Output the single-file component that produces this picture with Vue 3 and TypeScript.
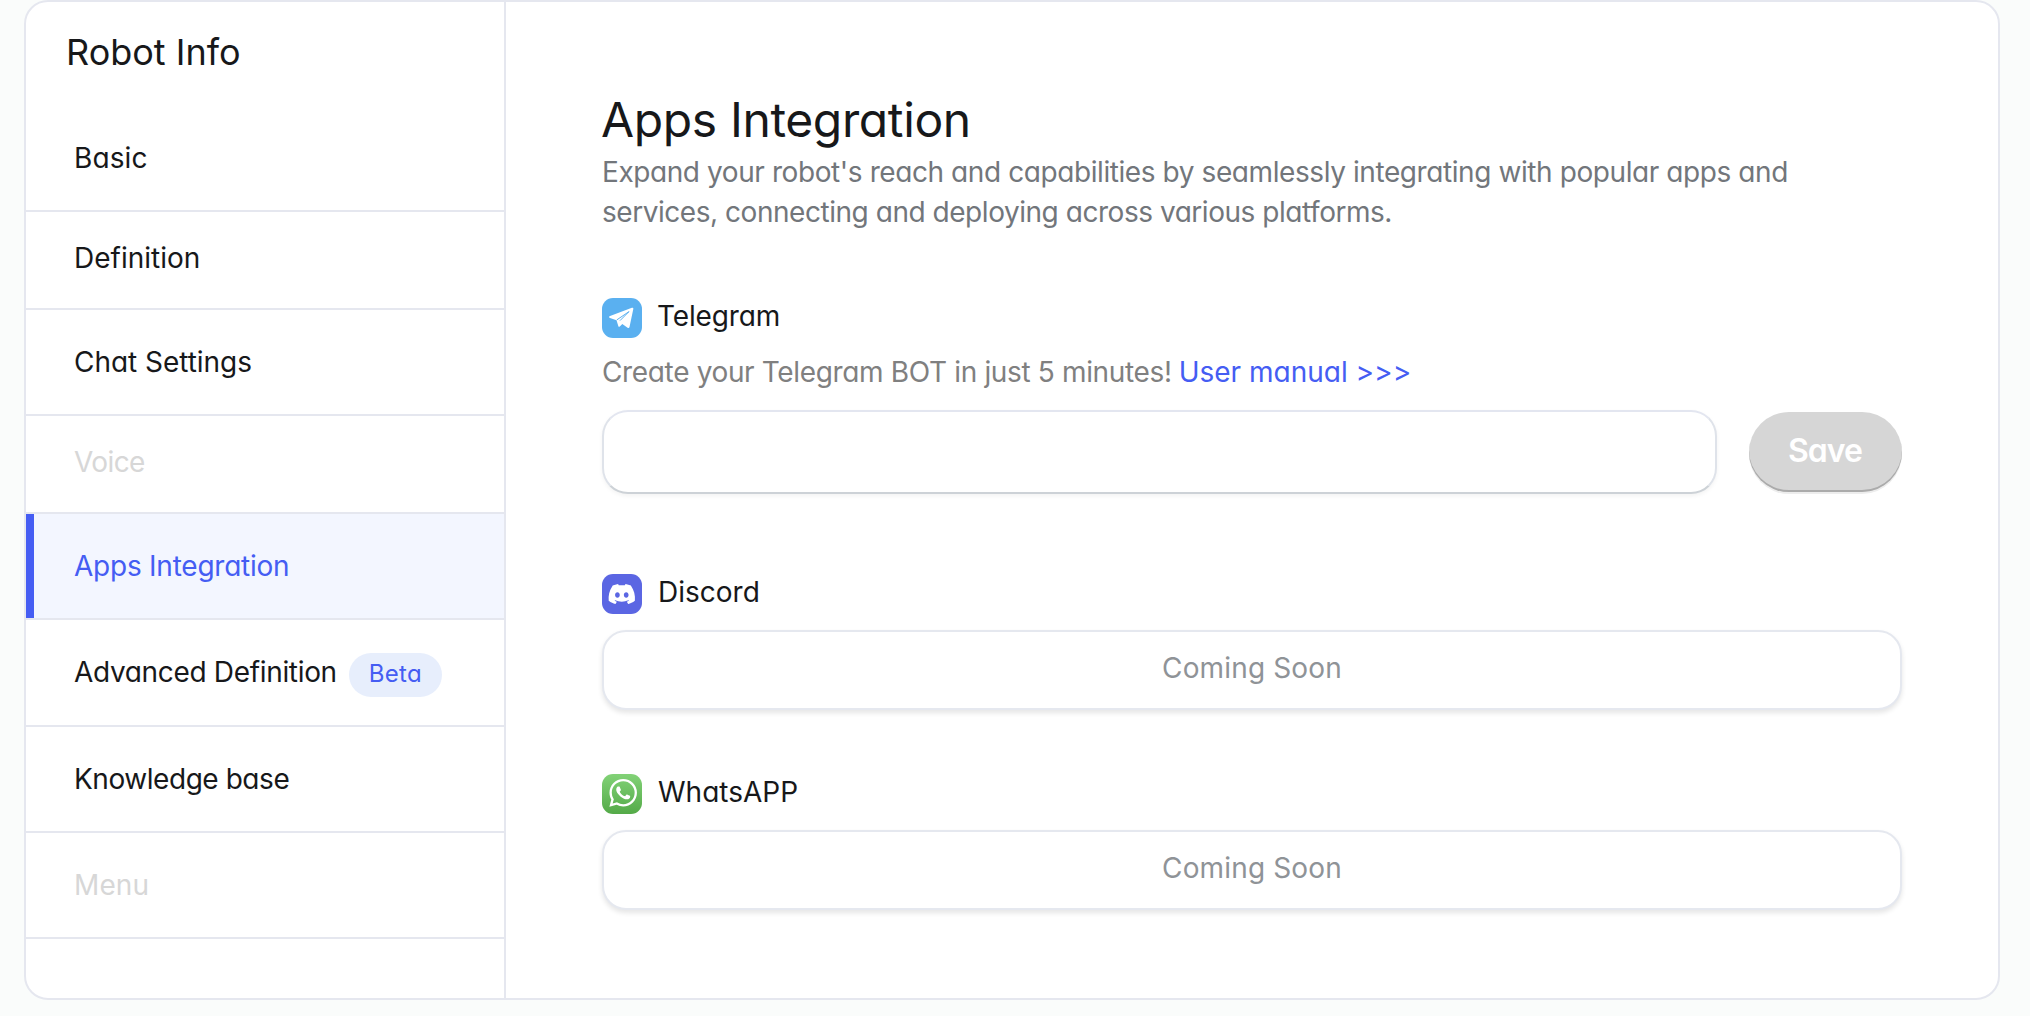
<script setup lang="ts">
import { ref } from 'vue'

interface NavItem {
  label: string
  tracking: number
  state?: 'active' | 'disabled'
  compact?: boolean
  badge?: string
}

const navItems: NavItem[] = [
  { label: 'Basic', tracking: 0.1 },
  { label: 'Definition', tracking: 0 },
  { label: 'Chat Settings', tracking: -0.04 },
  { label: 'Voice', tracking: -0.6, state: 'disabled' },
  { label: 'Apps Integration', tracking: -0.24, state: 'active' },
  { label: 'Advanced Definition', tracking: -0.33, badge: 'Beta' },
  { label: 'Knowledge base', tracking: -0.45 },
  { label: 'Menu', tracking: 0.1, state: 'disabled' },
]

const compactLabels = ['Definition', 'Voice']

const token = ref('')
</script>

<template>
  <div class="page">
    <div class="card">
      <aside class="sidebar">
        <h2 class="sidebar-title">Robot Info</h2>
        <nav>
          <a
            v-for="item in navItems"
            :key="item.label"
            class="nav-item"
            :class="[item.state, { compact: compactLabels.includes(item.label), tall: item.badge }]"
          >
            <span :style="{ letterSpacing: item.tracking + 'px' }">{{ item.label }}</span>
            <span v-if="item.badge" class="badge">{{ item.badge }}</span>
          </a>
        </nav>
      </aside>

      <main class="content">
        <h1 class="title">Apps Integration</h1>
        <p class="description">
          <span class="line-one">Expand your robot's reach and capabilities by seamlessly integrating with popular apps and</span>
          <span class="line-two">services, connecting and deploying across various platforms.</span>
        </p>

        <section class="app telegram">
          <header class="app-head">
            <svg class="app-icon" viewBox="0 0 40 40">
              <rect width="40" height="40" rx="11" fill="#5ab0f0" />
              <path
                fill="#fff"
                d="M7.4 18.2 29.9 9.8Q31.6 9.3 31.3 11L27.5 28.9Q27.1 30.6 25.6 29.7L20.3 26 17.8 28.4Q16.7 29.3 16.3 27.9L14.5 22.2 8 20Q6.3 19.2 7.4 18.2Z"
              />
              <path fill="none" stroke="#5ab0f0" stroke-width="1" stroke-linejoin="round" d="M14.8 21.9 27 13.6 18 22.6" />
            </svg>
            <span class="app-name name-telegram">Telegram</span>
          </header>
          <p class="hint"><span class="hint-text">Create your Telegram BOT in just 5 minutes!</span><a class="manual">User manual &gt;&gt;&gt;</a></p>
          <div class="token-row">
            <input v-model="token" class="token-input" type="text" />
            <button class="save" type="button" disabled>Save</button>
          </div>
        </section>

        <section class="app discord">
          <header class="app-head">
            <svg class="app-icon" viewBox="0 0 40 40">
              <rect width="40" height="40" rx="11" fill="#5b66e3" />
              <path
                transform="translate(6.6 6.8) scale(1.1)"
                fill="#fff"
                d="M20.317 4.3698a19.7913 19.7913 0 00-4.8851-1.5152.0741.0741 0 00-.0785.0371c-.211.3753-.4447.8648-.6083 1.2495-1.8447-.2762-3.68-.2762-5.4868 0-.1636-.3933-.4058-.8742-.6177-1.2495a.077.077 0 00-.0785-.037 19.7363 19.7363 0 00-4.8852 1.515.0699.0699 0 00-.0321.0277C.5334 9.0458-.319 13.5799.0992 18.0578a.0824.0824 0 00.0312.0561c2.0528 1.5076 4.0413 2.4228 5.9929 3.0294a.0777.0777 0 00.0842-.0276c.4616-.6304.8731-1.2952 1.226-1.9942a.076.076 0 00-.0416-.1057c-.6528-.2476-1.2743-.5495-1.8722-.8923a.077.077 0 01-.0076-.1277c.1258-.0943.2517-.1923.3718-.2914a.0743.0743 0 01.0776-.0105c3.9278 1.7933 8.18 1.7933 12.0614 0a.0739.0739 0 01.0785.0095c.1202.099.246.1981.3728.2924a.077.077 0 01-.0066.1276 12.2986 12.2986 0 01-1.873.8914.0766.0766 0 00-.0407.1067c.3604.698.7719 1.3628 1.225 1.9932a.076.076 0 00.0842.0286c1.961-.6067 3.9495-1.5219 6.0023-3.0294a.077.077 0 00.0313-.0552c.5004-5.177-.8382-9.6739-3.5485-13.6604a.061.061 0 00-.0312-.0286zM8.02 15.3312c-1.1825 0-2.1569-1.0857-2.1569-2.419 0-1.3332.9555-2.4189 2.157-2.4189 1.2108 0 2.1757 1.0952 2.1568 2.419 0 1.3332-.9555 2.4189-2.1569 2.4189zm7.9748 0c-1.1825 0-2.1569-1.0857-2.1569-2.419 0-1.3332.9554-2.4189 2.1569-2.4189 1.2108 0 2.1757 1.0952 2.1568 2.419 0 1.3332-.946 2.4189-2.1568 2.4189Z"
              />
            </svg>
            <span class="app-name">Discord</span>
          </header>
          <div class="placeholder">Coming Soon</div>
        </section>

        <section class="app whatsapp">
          <header class="app-head">
            <svg class="app-icon" viewBox="0 0 40 40">
              <defs>
                <linearGradient id="whatsapp-fill" x1="0" y1="0" x2="0" y2="1">
                  <stop offset="0" stop-color="#82d277" />
                  <stop offset="1" stop-color="#54aa48" />
                </linearGradient>
              </defs>
              <rect width="40" height="40" rx="11" fill="url(#whatsapp-fill)" />
              <path
                transform="translate(7.3 5) scale(1.155)"
                fill="#fff"
                d="M17.472 14.382c-.297-.149-1.758-.867-2.03-.967-.273-.099-.471-.148-.67.15-.197.297-.767.966-.94 1.164-.173.199-.347.223-.644.075-.297-.15-1.255-.463-2.39-1.475-.883-.788-1.48-1.761-1.653-2.059-.173-.297-.018-.458.13-.606.134-.133.298-.347.446-.52.149-.174.198-.298.298-.497.099-.198.05-.371-.025-.52-.075-.149-.669-1.612-.916-2.207-.242-.579-.487-.5-.669-.51-.173-.008-.371-.01-.57-.01-.198 0-.52.074-.792.372-.272.297-1.04 1.016-1.04 2.479 0 1.462 1.065 2.875 1.213 3.074.149.198 2.096 3.2 5.077 4.487.709.306 1.262.489 1.694.625.712.227 1.36.195 1.871.118.571-.085 1.758-.719 2.006-1.413.248-.694.248-1.289.173-1.413-.074-.124-.272-.198-.57-.347m-5.421 7.403h-.004a9.87 9.87 0 01-5.031-1.378l-.361-.214-3.741.982.998-3.648-.235-.374a9.86 9.86 0 01-1.51-5.26c.001-5.45 4.436-9.884 9.888-9.884 2.64 0 5.122 1.03 6.988 2.898a9.825 9.825 0 012.893 6.994c-.003 5.45-4.437 9.884-9.885 9.884m8.413-18.297A11.815 11.815 0 0012.05 0C5.495 0 .16 5.335.157 11.892c0 2.096.547 4.142 1.588 5.945L.057 24l6.305-1.654a11.882 11.882 0 005.683 1.448h.005c6.554 0 11.89-5.335 11.893-11.893a11.821 11.821 0 00-3.48-8.413Z"
              />
            </svg>
            <span class="app-name">WhatsAPP</span>
          </header>
          <div class="placeholder">Coming Soon</div>
        </section>
      </main>
    </div>
  </div>
</template>

<style>
body {
  margin: 0;
  background: #fafcfb;
}
</style>

<style scoped>
.page {
  box-sizing: border-box;
  height: 1016px;
  padding: 0 30px 16px 24px;
  background: #fafcfb;
  font-family: Inter, "Liberation Sans", sans-serif;
  font-feature-settings: "cv11";
  font-size: 28px;
  font-weight: 400;
  color: #17181a;
}

.page * {
  box-sizing: border-box;
}

.card {
  display: flex;
  height: 1000px;
  border: 2px solid #e5e7ef;
  border-radius: 24px;
  background: #fff;
  overflow: hidden;
}

.sidebar {
  width: 480px;
  flex: none;
  border-right: 2px solid #e5e7ef;
}

.sidebar-title {
  margin: 0;
  height: 104px;
  padding-left: 40px;
  font-size: 36px;
  font-weight: inherit;
  line-height: 100px;
}

.nav-item {
  display: flex;
  align-items: center;
  height: 106px;
  padding-left: 48px;
  border-bottom: 2px solid #e5e7ef;
  line-height: 40px;
  white-space: nowrap;
}

.nav-item.compact {
  height: 98px;
  padding-bottom: 4px;
}

.nav-item.tall {
  height: 107px;
  padding-bottom: 1px;
}

.nav-item.disabled {
  color: #d7d7d7;
}

.nav-item.active {
  background: #f3f6ff;
  box-shadow: inset 8px 0 0 #455df3;
  color: #455df3;
}

.badge {
  width: 93px;
  height: 44px;
  margin: 6px 0 0 12px;
  padding-bottom: 3px;
  border-radius: 22px;
  background: #e7eefc;
  color: #455df3;
  font-size: 24px;
  line-height: 41px;
  letter-spacing: 0.3px;
  text-align: center;
}

.content {
  flex: 1;
  padding: 88px 96px 0;
}

.title {
  margin: 0 0 0 -1px;
  font-size: 48px;
  font-weight: inherit;
  line-height: 60px;
  letter-spacing: -0.37px;
}

.description {
  display: flex;
  flex-direction: column;
  margin: 2px 0 66px;
  color: #72767b;
  line-height: 40px;
  white-space: nowrap;
}

.line-one {
  letter-spacing: -0.415px;
}

.line-two {
  letter-spacing: -0.46px;
}

.app-head {
  display: flex;
  gap: 16px;
  height: 40px;
}

.app-icon {
  width: 40px;
  height: 40px;
  flex: none;
}

.app-name {
  line-height: 36px;
}

.name-telegram {
  margin-left: -1px;
  letter-spacing: -0.15px;
}

.hint {
  display: flex;
  gap: 7px;
  margin: 14px 0 18px;
  color: #808080;
  line-height: 40px;
  white-space: nowrap;
}

.hint-text {
  letter-spacing: -0.35px;
}

.manual {
  color: #455df3;
  letter-spacing: 0;
}

.token-row {
  display: flex;
  align-items: center;
  gap: 32px;
}

.token-input {
  flex: 1;
  min-width: 0;
  height: 84px;
  padding: 0 24px;
  border: 2px solid #dfe3ea;
  border-top-color: #e3e6f0;
  border-bottom-color: #cdd2d7;
  border-radius: 26px;
  outline: none;
  background: #fff;
  box-shadow: 0 2px 4px rgba(0, 0, 0, 0.05);
  font: inherit;
}

.save {
  width: 153px;
  height: 80px;
  padding: 0 1px 3px 0;
  border: 0;
  border-radius: 40px;
  background: #d6d6d6;
  box-shadow: inset 0 -2px 0 #ababab, 0 2px 0 #ededed;
  color: #fff;
  font: 600 32px Inter, "Liberation Sans", sans-serif;
  font-feature-settings: "cv11";
  letter-spacing: -1px;
}

.discord {
  margin-top: 80px;
}

.whatsapp {
  margin-top: 64px;
}

.placeholder {
  height: 80px;
  margin-top: 16px;
  border: 2px solid #e5e8ef;
  border-radius: 24px;
  background: #fff;
  box-shadow: 0 3px 5px rgba(0, 0, 0, 0.1);
  color: #8f9397;
  line-height: 72px;
  letter-spacing: 0.15px;
  text-align: center;
}
</style>
